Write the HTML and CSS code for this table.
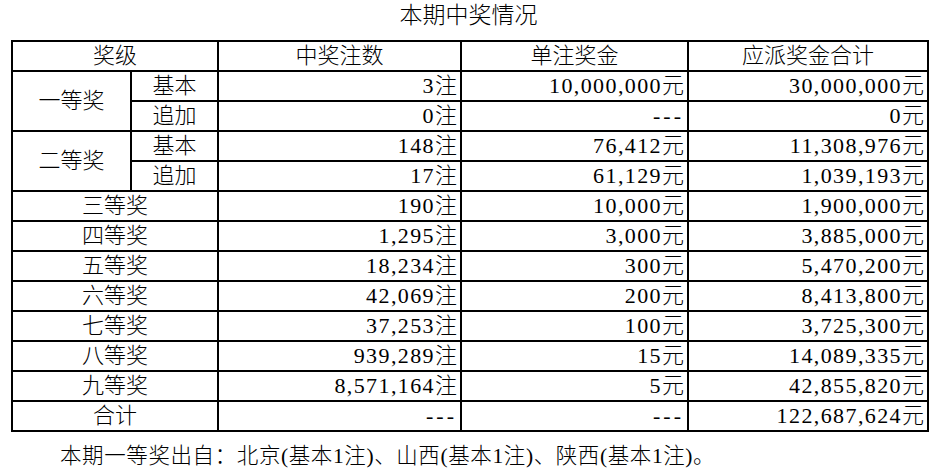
FILE: index.html
```html
<!DOCTYPE html>
<html lang="zh-CN">
<head>
<meta charset="utf-8">
<title>本期中奖情况</title>
<link rel="stylesheet" href="styles.css">
</head>
<body>
<h1 class="title">本期中奖情况</h1>
<table class="prize">
  <colgroup>
    <col class="c1"><col class="c2"><col class="c3"><col class="c4"><col class="c5">
  </colgroup>
  <thead>
    <tr>
      <th colspan="2">奖级</th>
      <th>中奖注数</th>
      <th>单注奖金</th>
      <th>应派奖金合计</th>
    </tr>
  </thead>
  <tbody>
    <tr>
      <td class="lvl" rowspan="2">一等奖</td>
      <td class="sub">基本</td>
      <td class="num"><span class="amt">3</span>注</td>
      <td class="num"><span class="amt">10,000,000</span>元</td>
      <td class="num"><span class="amt">30,000,000</span>元</td>
    </tr>
    <tr>
      <td class="sub">追加</td>
      <td class="num"><span class="amt">0</span>注</td>
      <td class="num"><span class="dash">---</span></td>
      <td class="num"><span class="amt">0</span>元</td>
    </tr>
    <tr>
      <td class="lvl" rowspan="2">二等奖</td>
      <td class="sub">基本</td>
      <td class="num"><span class="amt">148</span>注</td>
      <td class="num"><span class="amt">76,412</span>元</td>
      <td class="num"><span class="amt">11,308,976</span>元</td>
    </tr>
    <tr>
      <td class="sub">追加</td>
      <td class="num"><span class="amt">17</span>注</td>
      <td class="num"><span class="amt">61,129</span>元</td>
      <td class="num"><span class="amt">1,039,193</span>元</td>
    </tr>
    <tr>
      <td class="lvl" colspan="2">三等奖</td>
      <td class="num"><span class="amt">190</span>注</td>
      <td class="num"><span class="amt">10,000</span>元</td>
      <td class="num"><span class="amt">1,900,000</span>元</td>
    </tr>
    <tr>
      <td class="lvl" colspan="2">四等奖</td>
      <td class="num"><span class="amt">1,295</span>注</td>
      <td class="num"><span class="amt">3,000</span>元</td>
      <td class="num"><span class="amt">3,885,000</span>元</td>
    </tr>
    <tr>
      <td class="lvl" colspan="2">五等奖</td>
      <td class="num"><span class="amt">18,234</span>注</td>
      <td class="num"><span class="amt">300</span>元</td>
      <td class="num"><span class="amt">5,470,200</span>元</td>
    </tr>
    <tr>
      <td class="lvl" colspan="2">六等奖</td>
      <td class="num"><span class="amt">42,069</span>注</td>
      <td class="num"><span class="amt">200</span>元</td>
      <td class="num"><span class="amt">8,413,800</span>元</td>
    </tr>
    <tr>
      <td class="lvl" colspan="2">七等奖</td>
      <td class="num"><span class="amt">37,253</span>注</td>
      <td class="num"><span class="amt">100</span>元</td>
      <td class="num"><span class="amt">3,725,300</span>元</td>
    </tr>
    <tr>
      <td class="lvl" colspan="2">八等奖</td>
      <td class="num"><span class="amt">939,289</span>注</td>
      <td class="num"><span class="amt">15</span>元</td>
      <td class="num"><span class="amt">14,089,335</span>元</td>
    </tr>
    <tr>
      <td class="lvl" colspan="2">九等奖</td>
      <td class="num"><span class="amt">8,571,164</span>注</td>
      <td class="num"><span class="amt">5</span>元</td>
      <td class="num"><span class="amt">42,855,820</span>元</td>
    </tr>
    <tr>
      <td class="lvl" colspan="2">合计</td>
      <td class="num"><span class="dash">---</span></td>
      <td class="num"><span class="dash">---</span></td>
      <td class="num"><span class="amt">122,687,624</span>元</td>
    </tr>
  </tbody>
</table>
<p class="note">本期一等奖出自：北京(基本1注)、山西(基本1注)、陕西(基本1注)。</p>
</body>
</html>
```

FILE: styles.css
```css
html, body {
  margin: 0;
  padding: 0;
  background: #ffffff;
}

body {
  width: 935px;
  color: #000000;
  font-family: "Liberation Serif", "Noto Sans CJK SC", serif;
  font-weight: 300;
}

.title {
  margin: 0;
  height: 40px;
  padding-left: 2px;
  font-size: 23px;
  font-weight: 300;
  line-height: 31px;
  text-align: center;
}

.prize {
  margin-left: 11px;
  width: 916px;
  table-layout: fixed;
  border-collapse: collapse;
  border: 2px solid #000;
  font-size: 22px;
}

.c1 { width: 119px; }
.c2 { width: 87px; }
.c3 { width: 243px; }
.c4 { width: 227px; }
.c5 { width: 240px; }

.prize tr {
  height: 30px;
}

.prize th,
.prize td {
  border: 2px solid #000;
  padding: 0 3px;
  height: 26px;
  line-height: 26px;
  font-weight: 300;
  white-space: nowrap;
  vertical-align: middle;
}

.prize th,
.lvl,
.sub {
  text-align: center;
}

.num {
  text-align: right;
  padding-right: 3px;
}

.amt {
  letter-spacing: 1.4px;
}

.dash {
  letter-spacing: 3px;
}

.note {
  margin: 12px 0 0 60px;
  font-size: 21.5px;
  line-height: 24px;
  letter-spacing: 0.6px;
  white-space: nowrap;
}
```
